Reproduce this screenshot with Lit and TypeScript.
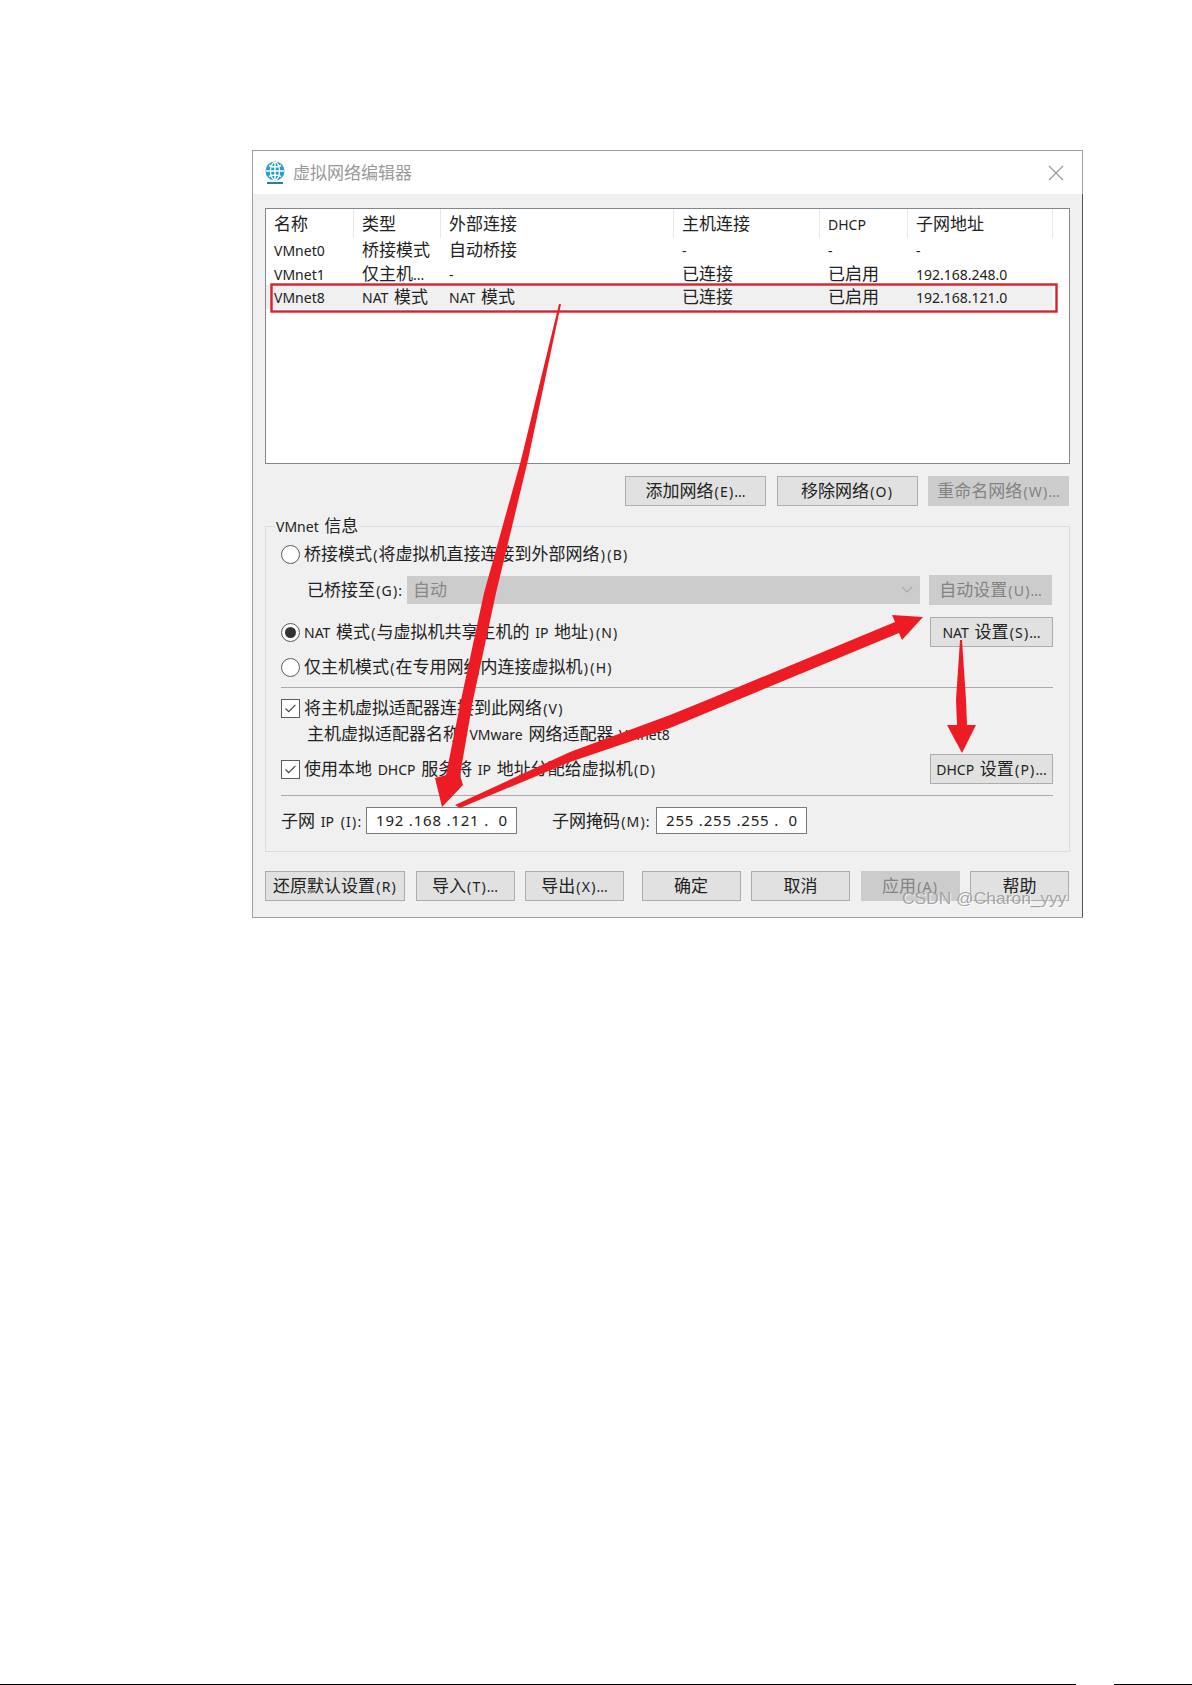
import { LitElement, html, css } from "lit";
import { customElement } from "lit/decorators.js";

const rows = [
  ["VMnet0", "桥接模式", "自动桥接", "-", "-", "-"],
  ["VMnet1", "仅主机...", "-", "已连接", "已启用", "192.168.248.0"],
  ["VMnet8", "NAT 模式", "NAT 模式", "已连接", "已启用", "192.168.121.0"],
];
const heads = ["名称", "类型", "外部连接", "主机连接", "DHCP", "子网地址"];

@customElement("app-root")
export class AppRoot extends LitElement {
  static styles = css`
    :host {
      display: block;
      height: 1685px;
      position: relative;
      overflow: hidden;
      background: #fff;
      font-family: "Noto Sans", "Noto Sans CJK SC", sans-serif;
      font-size: 17px;
      color: #222;
    }
    .page { padding: 150px 0 0 252px; }
    .dialog {
      position: relative;
      width: 831px;
      height: 768px;
      box-sizing: border-box;
      border: 1px solid #a0a0a0;
      border-right: none;
      background: #f0f0f0;
      display: flex;
      flex-direction: column;
    }
    .title {
      height: 43px;
      background: #fff;
      display: flex;
      align-items: center;
      gap: 7px;
      padding: 0 18px 0 11px;
      color: #999;
      font-size: 17px;
      border-right: 1px solid #a0a0a0;
    }
    .title svg { flex: none; }
    .title span { flex: 1; margin-bottom: 2px; }
    .body {
      flex: 1;
      padding: 14px 12px 0 12px;
      display: flex;
      flex-direction: column;
      border-right: 1px solid #555;
    }
    .list {
      height: 256px;
      box-sizing: border-box;
      border: 1px solid #828790;
      background: #fff;
      flex: none;
    }
    .grid { display: grid; grid-template-columns: 88px 87px 233px 146px 88px 145px; width: 787px; }
    .heads { height: 29px; align-items: center; }
    .heads div { height: 29px; line-height: 29px; padding-left: 8px; border-right: 1px solid #e8e8e8; box-sizing: border-box; }
    .row { height: 23.5px; line-height: 23px; }
    .row div { padding-left: 8px; white-space: nowrap; }
    .row.sel { background: #f0f0f0; }
    .t { margin-bottom: 3px; }
    .lat { font-size: 14px; word-spacing: 2px; }
    .par { padding: 0 1.2px; }
    .btn {
      box-sizing: border-box;
      height: 30px;
      background: #e1e1e1;
      border: 1px solid #adadad;
      display: flex;
      align-items: center;
      justify-content: center;
      white-space: nowrap;
    }
    .btn.off { background: #ccc; border-color: #ccc; color: #838383; }
    .listBtns { display: flex; justify-content: flex-end; gap: 10.5px; margin: 12px 1px 0 0; }
    .listBtns .btn { width: 141px; }
    .group {
      position: relative;
      margin-top: 20px;
      box-sizing: border-box;
      height: 326px;
      border: 1px solid #dcdcdc;
      padding: 12px 16px 0 15px;
    }
    .legend {
      position: absolute;
      left: 9px;
      top: -11px;
      line-height: 20px;
      background: #f0f0f0;
      padding: 0 1px;
    }
    .opt { display: flex; align-items: center; gap: 4px; height: 30px; white-space: nowrap; }
    .opt.between { justify-content: space-between; }
    .left { display: flex; align-items: center; gap: 4px; }
    .radio {
      width: 19px; height: 19px; box-sizing: border-box; flex: none;
      border: 1.5px solid #5c5c5c; border-radius: 50%; background: #fff;
      display: flex; align-items: center; justify-content: center;
    }
    .radio i { width: 11px; height: 11px; border-radius: 50%; background: #333; }
    .check { width: 19px; height: 19px; box-sizing: border-box; flex: none; border: 1.5px solid #5c5c5c; background: #fff; display: block; }
    .bridged { display: flex; align-items: center; margin: 6px 0 0 26px; height: 30px; }
    .bridged .lbl { width: 100px; white-space: nowrap; margin-bottom: 3px; }
    .select {
      width: 513px; height: 28px; background: #ccc; color: #888;
      display: flex; align-items: center; justify-content: space-between;
      padding: 0 7px 0 6px; box-sizing: border-box; flex: none;
    }
    .bridged .btn { width: 123px; margin-left: 9px; }
    .natRow { margin-top: 12px; }
    .natRow .btn { width: 123px; }
    .hostRow { margin-top: 5px; height: 30px; }
    .rule { height: 1px; background: #a9a9a9; }
    .r1 { margin-top: 5px; }
    .chk1 { margin-top: 5px; height: 30px; }
    .info { margin: 0 0 0 26px; height: 24px; line-height: 22px; white-space: nowrap; }
    .dhcp { margin-top: 7px; }
    .dhcp .btn { width: 123px; }
    .r2 { margin-top: 11px; }
    .subnet { display: flex; align-items: center; margin-top: 11px; height: 27px; }
    .subnet .l1 { width: 85px; white-space: nowrap; margin-bottom: 2px; }
    .subnet .l2 { width: 104px; margin-left: 35px; white-space: nowrap; margin-bottom: 2px; }
    .ip {
      width: 151px; height: 27px; box-sizing: border-box; background: #fff;
      border: 1px solid #7a7a7a; padding-left: 9px; line-height: 25px;
      font-family: "Noto Sans", sans-serif; font-size: 15px; letter-spacing: 0.8px; white-space: pre;
    }
    .bottom { display: flex; margin-top: 19px; gap: 10.5px; }
    .bottom .btn { width: 99px; }
    .bottom .btn.reset { width: 140px; }
    .bottom .gap { margin-left: 7px; }
    .overlay { position: absolute; left: 0; top: 0; pointer-events: none; }
    .mark {
      position: absolute; left: 902px; top: 887px;
      font-family: "Liberation Sans", Arial, sans-serif; font-size: 17.4px; line-height: 22px;
      color: rgba(150,150,150,0.85); text-shadow: 1px 1px 1px rgba(255,255,255,0.8);
      white-space: nowrap;
    }
    .foot { position: absolute; left: 0; right: 0; bottom: 0; height: 1px; background: linear-gradient(to right, #000 1076px, #fff 1076px, #fff 1114px, #000 1114px); }
  `;

  private cell(t: string) {
    // Latin runs are set a little smaller than the CJK glyphs, as in the reference
    const parts = t.split(/([\u4e00-\u9fff]+)/).filter(Boolean);
    return html`<span class="t">${parts.map((p) =>
      /[\u4e00-\u9fff]/.test(p)
        ? p
        : html`<span class="lat">${p
            .split(/([()])/)
            .filter(Boolean)
            .map((q) => (q === "(" || q === ")" ? html`<span class="par">${q}</span>` : q))}</span>`
    )}</span>`;
  }

  private checkBox() {
    return html`<svg class="check" viewBox="0 0 19 19"><path d="M4 9.5l3.5 3.5L15 5.5" stroke="#444" stroke-width="1.4" fill="none" /></svg>`;
  }

  render() {
    return html`
      <div class="page">
        <div class="dialog">
          <div class="title">
            <svg width="22" height="24" viewBox="0 0 22 24">
              <circle cx="11" cy="10" r="9.5" fill="#2a9fc4" />
              <path d="M2 10h18M11 1v18M5 4.5c4 2 8 2 12 0M5 15.5c4-2 8-2 12 0" stroke="#fff" stroke-width="1.4" fill="none" />
              <ellipse cx="11" cy="10" rx="4.5" ry="9" stroke="#fff" stroke-width="1.2" fill="none" />
              <path d="M3 22h16" stroke="#2a7f9f" stroke-width="2" />
            </svg>
            <span>虚拟网络编辑器</span>
            <svg width="16" height="16" viewBox="0 0 16 16"><path d="M1 1l14 14M15 1L1 15" stroke="#9a9a9a" stroke-width="1.2" /></svg>
          </div>
          <div class="body">
            <div class="list">
              <div class="grid heads">${heads.map((h) => html`<div>${this.cell(h)}</div>`)}</div>
              ${rows.map(
                (r, i) => html`<div class="grid row ${i === 2 ? "sel" : ""}">${r.map((c) => html`<div>${this.cell(c)}</div>`)}</div>`
              )}
            </div>
            <div class="listBtns">
              <div class="btn">${this.cell("添加网络(E)...")}</div>
              <div class="btn">${this.cell("移除网络(O)")}</div>
              <div class="btn off">${this.cell("重命名网络(W)...")}</div>
            </div>
            <div class="group">
              <div class="legend">${this.cell("VMnet 信息")}</div>
              <div class="opt"><span class="radio"></span>${this.cell("桥接模式(将虚拟机直接连接到外部网络)(B)")}</div>
              <div class="bridged">
                <span class="lbl">${this.cell("已桥接至(G):")}</span>
                <div class="select">
                  ${this.cell("自动")}
                  <svg width="12" height="8" viewBox="0 0 12 8"><path d="M1 1l5 5 5-5" stroke="#aaa" stroke-width="1.2" fill="none" /></svg>
                </div>
                <div class="btn off">${this.cell("自动设置(U)...")}</div>
              </div>
              <div class="opt between natRow">
                <div class="left"><span class="radio"><i></i></span>${this.cell("NAT 模式(与虚拟机共享主机的 IP 地址)(N)")}</div>
                <div class="btn">${this.cell("NAT 设置(S)...")}</div>
              </div>
              <div class="opt hostRow"><span class="radio"></span>${this.cell("仅主机模式(在专用网络内连接虚拟机)(H)")}</div>
              <div class="rule r1"></div>
              <div class="opt chk1">${this.checkBox()}${this.cell("将主机虚拟适配器连接到此网络(V)")}</div>
              <div class="info">${this.cell("主机虚拟适配器名称: VMware 网络适配器 VMnet8")}</div>
              <div class="opt between dhcp">
                <div class="left">${this.checkBox()}${this.cell("使用本地 DHCP 服务将 IP 地址分配给虚拟机(D)")}</div>
                <div class="btn">${this.cell("DHCP 设置(P)...")}</div>
              </div>
              <div class="rule r2"></div>
              <div class="subnet">
                <span class="l1">${this.cell("子网 IP (I):")}</span>
                <div class="ip">192 .168 .121 .  0</div>
                <span class="l2">${this.cell("子网掩码(M):")}</span>
                <div class="ip">255 .255 .255 .  0</div>
              </div>
            </div>
            <div class="bottom">
              <div class="btn reset">${this.cell("还原默认设置(R)")}</div>
              <div class="btn">${this.cell("导入(T)...")}</div>
              <div class="btn">${this.cell("导出(X)...")}</div>
              <div class="btn gap">${this.cell("确定")}</div>
              <div class="btn">${this.cell("取消")}</div>
              <div class="btn off">${this.cell("应用(A)")}</div>
              <div class="btn">${this.cell("帮助")}</div>
            </div>
          </div>
        </div>
      </div>
      <svg class="overlay" width="1192" height="1685" viewBox="0 0 1192 1685">
        <rect x="271.5" y="284.5" width="785" height="27" fill="none" stroke="#d9202c" stroke-width="2.4" />
        <polygon fill="#ed1c24" points="559,304 561,304 528,460 496,593 473,700 460,775 463,785 442,807 435,778 446,775 461,700 484,593 521,460" />
        <polygon fill="#ed1c24" points="455,805 570,752 670,715 707,700 895,622 892,615 923,617 902,640 899,633 670,728 570,762 460,808" />
        <polygon fill="#ed1c24" points="960,640 962,640 966,700 967,725 976,725 962,753 947,725 957,725 956,700" />
      </svg>
      <div class="mark">CSDN @Charon_yyy</div>
      <div class="foot"></div>
    `;
  }
}
